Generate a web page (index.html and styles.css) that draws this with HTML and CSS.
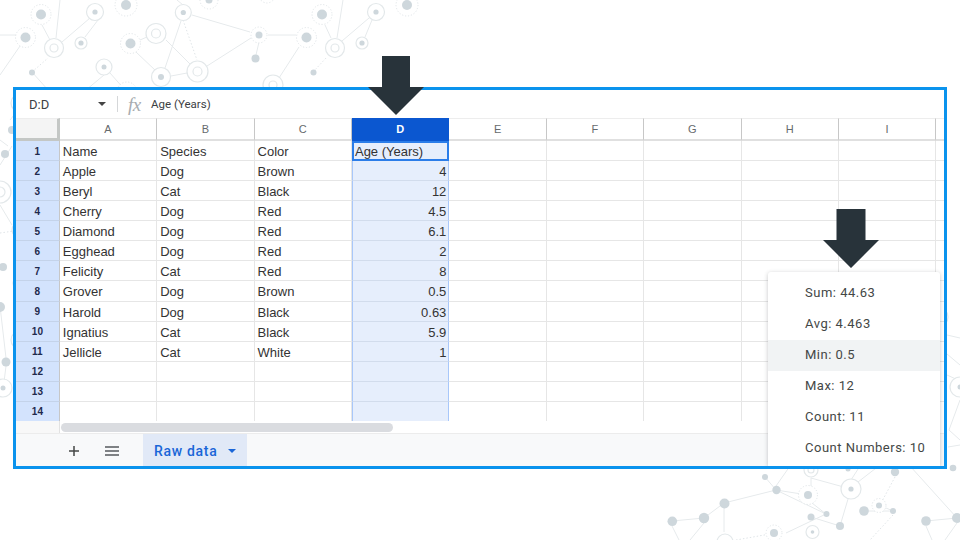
FILE: index.html
```html
<!DOCTYPE html>
<html lang="en">
<head>
<meta charset="utf-8">
<title>Raw data</title>
<link rel="stylesheet" href="styles.css">
</head>
<body>
<svg class="backdrop" viewBox="0 0 960 540" width="960" height="540" aria-hidden="true">
  <g class="ln">
    <path d="M0 35H16M0 75L20 46M42 25L50 40M60 0L56 38M62 42L90 18M98 20L85 37M32 72L48 90M104 75L86 90M110 73L125 90M136 52L156 71M140 40L147 37M166 40L191 65M181 21L165 68M171 76L187 73M192 15L250 32M207 66L251 38M268 35H296M259 42L256 55M299 47L279 78M325 25L331 38M343 0L337 38M342 41L369 18M372 20L365 37M177 0L183 5"/>
    <path d="M0 306L6 358M6 366L4 382M0 140L8 146M0 205L12 225M0 165L12 146M10 120L18 110"/>
    <path d="M672 521L704 518M672 526L679 540M704 518L724 503M704 523L690 540M724 503L776 490M724 508V532M776 490L808 495M776 490L826 514M812 503L826 514M826 514L786 533M765 477L776 490M776 486L790 466M811 478V486M811 478L851 489M851 489L840 526M811 517L840 526M858 482L880 465M851 480L860 466M864 511L893 511M879 505L893 511M926 521L957 518M926 526L932 540M957 523L945 540M910 466L957 518M947 335L960 338M947 354L960 365M947 375L958 380M960 400L949 430L960 440M948 447L960 445"/>
  </g>
  <g class="dl">
    <path d="M32 72L48 58M183 20L197 60M313 72L327 57M0 233L14 231M736 540L770 534M895 477L880 505M893 515L870 540"/>
  </g>
  <g class="ring">
    <circle cx="95" cy="12" r="8.5"/><circle cx="54" cy="48" r="9.5"/><circle cx="54" cy="48" r="4"/><circle cx="81" cy="43" r="6"/><circle cx="104" cy="67" r="8"/><circle cx="156" cy="33.5" r="10"/><circle cx="156" cy="33.5" r="4.5"/><circle cx="183.3" cy="12.5" r="8"/><circle cx="161" cy="77" r="9.5"/><circle cx="197.5" cy="71.5" r="10.5"/><circle cx="197.5" cy="71.5" r="4.5"/><circle cx="273" cy="85" r="10"/><circle cx="273" cy="85" r="4"/><circle cx="335" cy="48" r="9.5"/><circle cx="335" cy="48" r="4"/><circle cx="376" cy="12" r="8.5"/><circle cx="362" cy="43" r="6"/><circle cx="0" cy="192" r="11"/><circle cx="0" cy="192" r="5"/><circle cx="20" cy="103" r="9"/><circle cx="20" cy="230" r="8"/><circle cx="22" cy="283" r="9"/><circle cx="20" cy="340" r="9"/><circle cx="3" cy="388" r="9"/><circle cx="725" cy="542" r="8"/><circle cx="811" cy="470" r="7"/><circle cx="811" cy="470" r="3"/><circle cx="851" cy="489" r="10"/><circle cx="812.5" cy="532" r="6.5"/><circle cx="938" cy="317" r="10"/><circle cx="960" cy="387" r="10"/>
  </g>
  <g class="dring">
    <circle cx="41" cy="14.5" r="10"/><circle cx="126" cy="5" r="11"/><circle cx="25.5" cy="37.5" r="10"/><circle cx="130.5" cy="43.5" r="10"/><circle cx="209" cy="0" r="9"/><circle cx="127" cy="92" r="10"/><circle cx="259" cy="35" r="8"/><circle cx="306.5" cy="37.5" r="10"/><circle cx="322" cy="14.5" r="10"/><circle cx="407" cy="5" r="11"/><circle cx="267" cy="-5" r="8"/><circle cx="808" cy="495" r="9.5"/><circle cx="774" cy="533" r="8"/><circle cx="879" cy="505.5" r="7"/>
  </g>
  <g class="dot">
    <circle cx="41" cy="14.5" r="5"/><circle cx="95" cy="12" r="2.6"/><circle cx="126" cy="5" r="5"/><circle cx="25.5" cy="37.5" r="5"/><circle cx="81" cy="43" r="2.6"/><circle cx="32" cy="72.5" r="3"/><circle cx="104" cy="67" r="2.5"/><circle cx="130.5" cy="43.5" r="5"/><circle cx="183.3" cy="12.5" r="2.6"/><circle cx="161" cy="77" r="3"/><circle cx="209" cy="0" r="3.5"/><circle cx="259" cy="35" r="3.5"/><circle cx="255.5" cy="58.5" r="4"/><circle cx="306.5" cy="37.5" r="5"/><circle cx="322" cy="14.5" r="5"/><circle cx="376" cy="12" r="2.6"/><circle cx="362" cy="43" r="2.6"/><circle cx="313.5" cy="72.5" r="3"/><circle cx="407" cy="5" r="5"/>
    <circle cx="5" cy="154" r="4"/><circle cx="3" cy="267" r="4"/><circle cx="0" cy="307" r="5"/><circle cx="6" cy="362" r="4.5"/><circle cx="3" cy="388" r="2.5"/><circle cx="12" cy="130" r="4"/>
    <circle cx="672.3" cy="521.3" r="4.8"/><circle cx="704" cy="518" r="5.2"/><circle cx="724.5" cy="503.5" r="5"/><circle cx="776.5" cy="490" r="4.2"/><circle cx="808" cy="495" r="4"/><circle cx="765" cy="477" r="3"/><circle cx="811" cy="517" r="3.5"/><circle cx="774" cy="533" r="4"/><circle cx="812.5" cy="532" r="1.8"/><circle cx="851" cy="489" r="2.6"/><circle cx="826.5" cy="514" r="3"/><circle cx="840" cy="526" r="4"/><circle cx="864" cy="511" r="4.8"/><circle cx="879" cy="505.5" r="3"/><circle cx="893" cy="511" r="3"/><circle cx="895" cy="472" r="4.2"/><circle cx="953" cy="468" r="3.3"/><circle cx="926" cy="521" r="4.8"/><circle cx="957" cy="518" r="5"/><circle cx="848" cy="469" r="2.5"/><circle cx="960" cy="387" r="2.5"/>
  </g>
</svg>

<main class="frame">
  <div class="toolbar">
    <span class="namebox">D:D</span>
    <svg class="caret" viewBox="0 0 8 4" width="8" height="4"><path d="M0 0H8L4 4Z"/></svg>
    <span class="divider"></span>
    <span class="fx">fx</span>
    <span class="formula">Age (Years)</span>
  </div>

  <div class="sheet">
    <div class="corner"></div><div class="ch">A</div><div class="ch">B</div><div class="ch">C</div><div class="ch ch-sel">D</div><div class="ch">E</div><div class="ch">F</div><div class="ch">G</div><div class="ch">H</div><div class="ch">I</div><div class="ch ch-end"></div>

    <div class="rh rh-first">1</div><div class="c">Name</div><div class="c">Species</div><div class="c">Color</div><div class="c active">Age (Years)</div><div class="c"></div><div class="c"></div><div class="c"></div><div class="c"></div><div class="c"></div><div class="c end"></div>
    <div class="rh">2</div><div class="c">Apple</div><div class="c">Dog</div><div class="c">Brown</div><div class="c sel num">4</div><div class="c"></div><div class="c"></div><div class="c"></div><div class="c"></div><div class="c"></div><div class="c end"></div>
    <div class="rh">3</div><div class="c">Beryl</div><div class="c">Cat</div><div class="c">Black</div><div class="c sel num">12</div><div class="c"></div><div class="c"></div><div class="c"></div><div class="c"></div><div class="c"></div><div class="c end"></div>
    <div class="rh">4</div><div class="c">Cherry</div><div class="c">Dog</div><div class="c">Red</div><div class="c sel num">4.5</div><div class="c"></div><div class="c"></div><div class="c"></div><div class="c"></div><div class="c"></div><div class="c end"></div>
    <div class="rh">5</div><div class="c">Diamond</div><div class="c">Dog</div><div class="c">Red</div><div class="c sel num">6.1</div><div class="c"></div><div class="c"></div><div class="c"></div><div class="c"></div><div class="c"></div><div class="c end"></div>
    <div class="rh">6</div><div class="c">Egghead</div><div class="c">Dog</div><div class="c">Red</div><div class="c sel num">2</div><div class="c"></div><div class="c"></div><div class="c"></div><div class="c"></div><div class="c"></div><div class="c end"></div>
    <div class="rh">7</div><div class="c">Felicity</div><div class="c">Cat</div><div class="c">Red</div><div class="c sel num">8</div><div class="c"></div><div class="c"></div><div class="c"></div><div class="c"></div><div class="c"></div><div class="c end"></div>
    <div class="rh">8</div><div class="c">Grover</div><div class="c">Dog</div><div class="c">Brown</div><div class="c sel num">0.5</div><div class="c"></div><div class="c"></div><div class="c"></div><div class="c"></div><div class="c"></div><div class="c end"></div>
    <div class="rh">9</div><div class="c">Harold</div><div class="c">Dog</div><div class="c">Black</div><div class="c sel num">0.63</div><div class="c"></div><div class="c"></div><div class="c"></div><div class="c"></div><div class="c"></div><div class="c end"></div>
    <div class="rh">10</div><div class="c">Ignatius</div><div class="c">Cat</div><div class="c">Black</div><div class="c sel num">5.9</div><div class="c"></div><div class="c"></div><div class="c"></div><div class="c"></div><div class="c"></div><div class="c end"></div>
    <div class="rh">11</div><div class="c">Jellicle</div><div class="c">Cat</div><div class="c">White</div><div class="c sel num">1</div><div class="c"></div><div class="c"></div><div class="c"></div><div class="c"></div><div class="c"></div><div class="c end"></div>
    <div class="rh">12</div><div class="c"></div><div class="c"></div><div class="c"></div><div class="c sel"></div><div class="c"></div><div class="c"></div><div class="c"></div><div class="c"></div><div class="c"></div><div class="c end"></div>
    <div class="rh">13</div><div class="c"></div><div class="c"></div><div class="c"></div><div class="c sel"></div><div class="c"></div><div class="c"></div><div class="c"></div><div class="c"></div><div class="c"></div><div class="c end"></div>
    <div class="rh">14</div><div class="c last"></div><div class="c last"></div><div class="c last"></div><div class="c sel last"></div><div class="c last"></div><div class="c last"></div><div class="c last"></div><div class="c last"></div><div class="c last"></div><div class="c end last"></div>
  </div>

  <div class="scrollrow">
    <div class="scrollgutter"></div>
    <div class="scrolltrack"><div class="thumb"></div></div>
  </div>

  <div class="tabbar">
    <svg class="tool-plus" viewBox="0 0 12 12" width="12" height="12"><path d="M6 1V11M1 6H11"/></svg>
    <svg class="tool-menu" viewBox="0 0 14 12" width="14" height="12"><path d="M0 2H14M0 6H14M0 10H14"/></svg>
    <div class="tab">
      <span>Raw data</span>
      <svg class="tabcaret" viewBox="0 0 8 4" width="8" height="4"><path d="M0 0H8L4 4Z"/></svg>
    </div>
  </div>

  <ul class="stats">
    <li>Sum: 44.63</li>
    <li>Avg: 4.463</li>
    <li class="hover">Min: 0.5</li>
    <li>Max: 12</li>
    <li>Count: 11</li>
    <li>Count Numbers: 10</li>
  </ul>
</main>

<svg class="arrow arrow-column" viewBox="0 0 56 59" width="56" height="59" aria-hidden="true"><path d="M14 0H42V31H56L28 59L0 31H14Z"/></svg>
<svg class="arrow arrow-stats" viewBox="0 0 56 59" width="56" height="59" aria-hidden="true"><path d="M13.500 0H42.500V31H56L28 59L0 31H13.500Z"/></svg>
</body>
</html>
```

FILE: styles.css
```css
* { box-sizing: border-box; }

html, body {
  margin: 0;
  width: 960px;
  height: 540px;
  overflow: hidden;
  background: #fff;
}

body {
  position: relative;
  padding: 87px 0 0 13px;
  font-family: "Liberation Sans", Arial, sans-serif;
}

.backdrop { position: absolute; left: 0; top: 0; filter: blur(0.400px); }
.ln path { fill: none; stroke: #e6eaec; stroke-width: 1; }
.dl path { fill: none; stroke: #dfe4e7; stroke-width: 1; stroke-dasharray: 1.5 2; }
.ring circle { fill: #fff; stroke: #e3e8ea; stroke-width: 1.2; }
.dring circle { fill: #fff; stroke: #dfe4e7; stroke-width: 1; stroke-dasharray: 1.2 1.8; }
.dot circle { fill: #ced7dc; }

.frame {
  position: relative;
  display: flex;
  flex-direction: column;
  width: 934px;
  height: 382px;
  border: 3px solid #0b93ed;
  background: #fff;
  overflow: hidden;
}

.toolbar {
  display: flex;
  align-items: center;
  height: 28px;
  flex: none;
  padding-left: 13px;
  color: #444746;
}
.namebox { width: 69px; font: 13px Roboto, sans-serif; color: #3c4043; }
.caret { fill: #444; margin-right: 11px; }
.divider { width: 1px; height: 16px; background: #d5d7d9; margin-right: 10px; }
.fx {
  width: 23px;
  font: italic 19px "Liberation Serif", serif;
  color: #a8acb0;
  letter-spacing: -0.500px;
  line-height: 1;
}
.formula { font: 11.500px Roboto, sans-serif; color: #3c4043; }

.sheet {
  display: grid;
  grid-template-columns: 43.800px repeat(9, 97.400px) 1fr;
  grid-template-rows: 23px repeat(14, 20.070px);
  height: 303px;
  flex: none;
}

.corner {
  background: #f4f4f4;
  border-right: 3px solid #c4c7c5;
  border-bottom: 3px solid #c4c7c5;
  border-top: 1px solid #ededed;
}
.ch {
  display: flex;
  align-items: center;
  justify-content: center;
  font-size: 11px;
  color: #666a6d;
  border-top: 1px solid #ededed;
  border-right: 1px solid #c7c7c7;
  border-bottom: 2px solid #e0e0e0;
}
.ch-sel {
  background: #0b57d0;
  color: #fff;
  font-weight: 700;
  border-color: #0b57d0;
}
.ch-end { border-right: 0; }

.rh {
  display: flex;
  align-items: center;
  justify-content: center;
  padding-top: 1px;
  font-size: 10px;
  font-weight: 700;
  color: #1f2a4d;
  background: #d3e3fd;
  border-right: 1px solid #c7c7c7;
  border-bottom: 1px solid #c4d3ea;
}

.c {
  display: flex;
  align-items: center;
  padding: 2px 3px 0;
  font-size: 13px;
  color: #333;
  white-space: nowrap;
  overflow: hidden;
  border-right: 1px solid #e6e6e6;
  border-bottom: 1px solid #e6e6e6;
}
.end { border-right: 0; }
.last { border-bottom: 0; }
.sel, .active { background: #e6eefc; }
.sel {
  border-left: 1.500px solid #a8c7fa;
  border-right: 1.500px solid #a8c7fa;
  border-bottom-color: #d2dcec;
}
.num { justify-content: flex-end; padding-right: 2px; }
.active { border: 2px solid #2b7de9; padding: 1px 1px 0; }

.scrollrow {
  display: flex;
  height: 13px;
  flex: none;
  border-bottom: 1px solid #ececec;
}
.scrollgutter {
  width: 44px;
  background: #f8f8f8;
  border-right: 1px solid #e2e2e2;
}
.scrolltrack { flex: 1; padding: 2px 0 0 1px; background: #fff; }
.thumb { width: 332px; height: 9px; border-radius: 5px; background: #dadce0; }

.tabbar {
  display: flex;
  align-items: center;
  flex: 1;
  padding-left: 52px;
  background: #f8f9fa;
}
.tool-plus { fill: none; stroke: #444746; stroke-width: 1.500; margin: 2px 25px 0 0; }
.tool-menu { fill: none; stroke: #55595d; stroke-width: 1.500; margin: 2px 24px 0 0; }
.tab {
  display: flex;
  align-items: center;
  align-self: stretch;
  width: 104px;
  padding: 2px 0 0 11px;
  background: #e1e9f7;
  font: 500 14px Roboto, sans-serif;
  letter-spacing: 0.700px;
  color: #1a66d8;
}
.tabcaret { fill: #1a66d8; margin-left: 11px; }

.stats {
  position: absolute;
  left: 752px;
  top: 182px;
  width: 172px;
  height: 194px;
  margin: 0;
  padding: 6px 0 0;
  list-style: none;
  background: #fff;
  border-radius: 3px 3px 0 0;
  box-shadow: 0 1px 4px rgba(60, 64, 67, 0.300);
  font: 13px Roboto, sans-serif;
  letter-spacing: 0.500px;
  color: #444746;
}
.stats li {
  display: flex;
  align-items: center;
  height: 31px;
  padding: 0 0 2px 37px;
}
.stats .hover { background: #f1f3f4; }

.arrow { position: absolute; fill: #28333a; }
.arrow-column { left: 368px; top: 56px; }
.arrow-stats { left: 823px; top: 209px; }
```
